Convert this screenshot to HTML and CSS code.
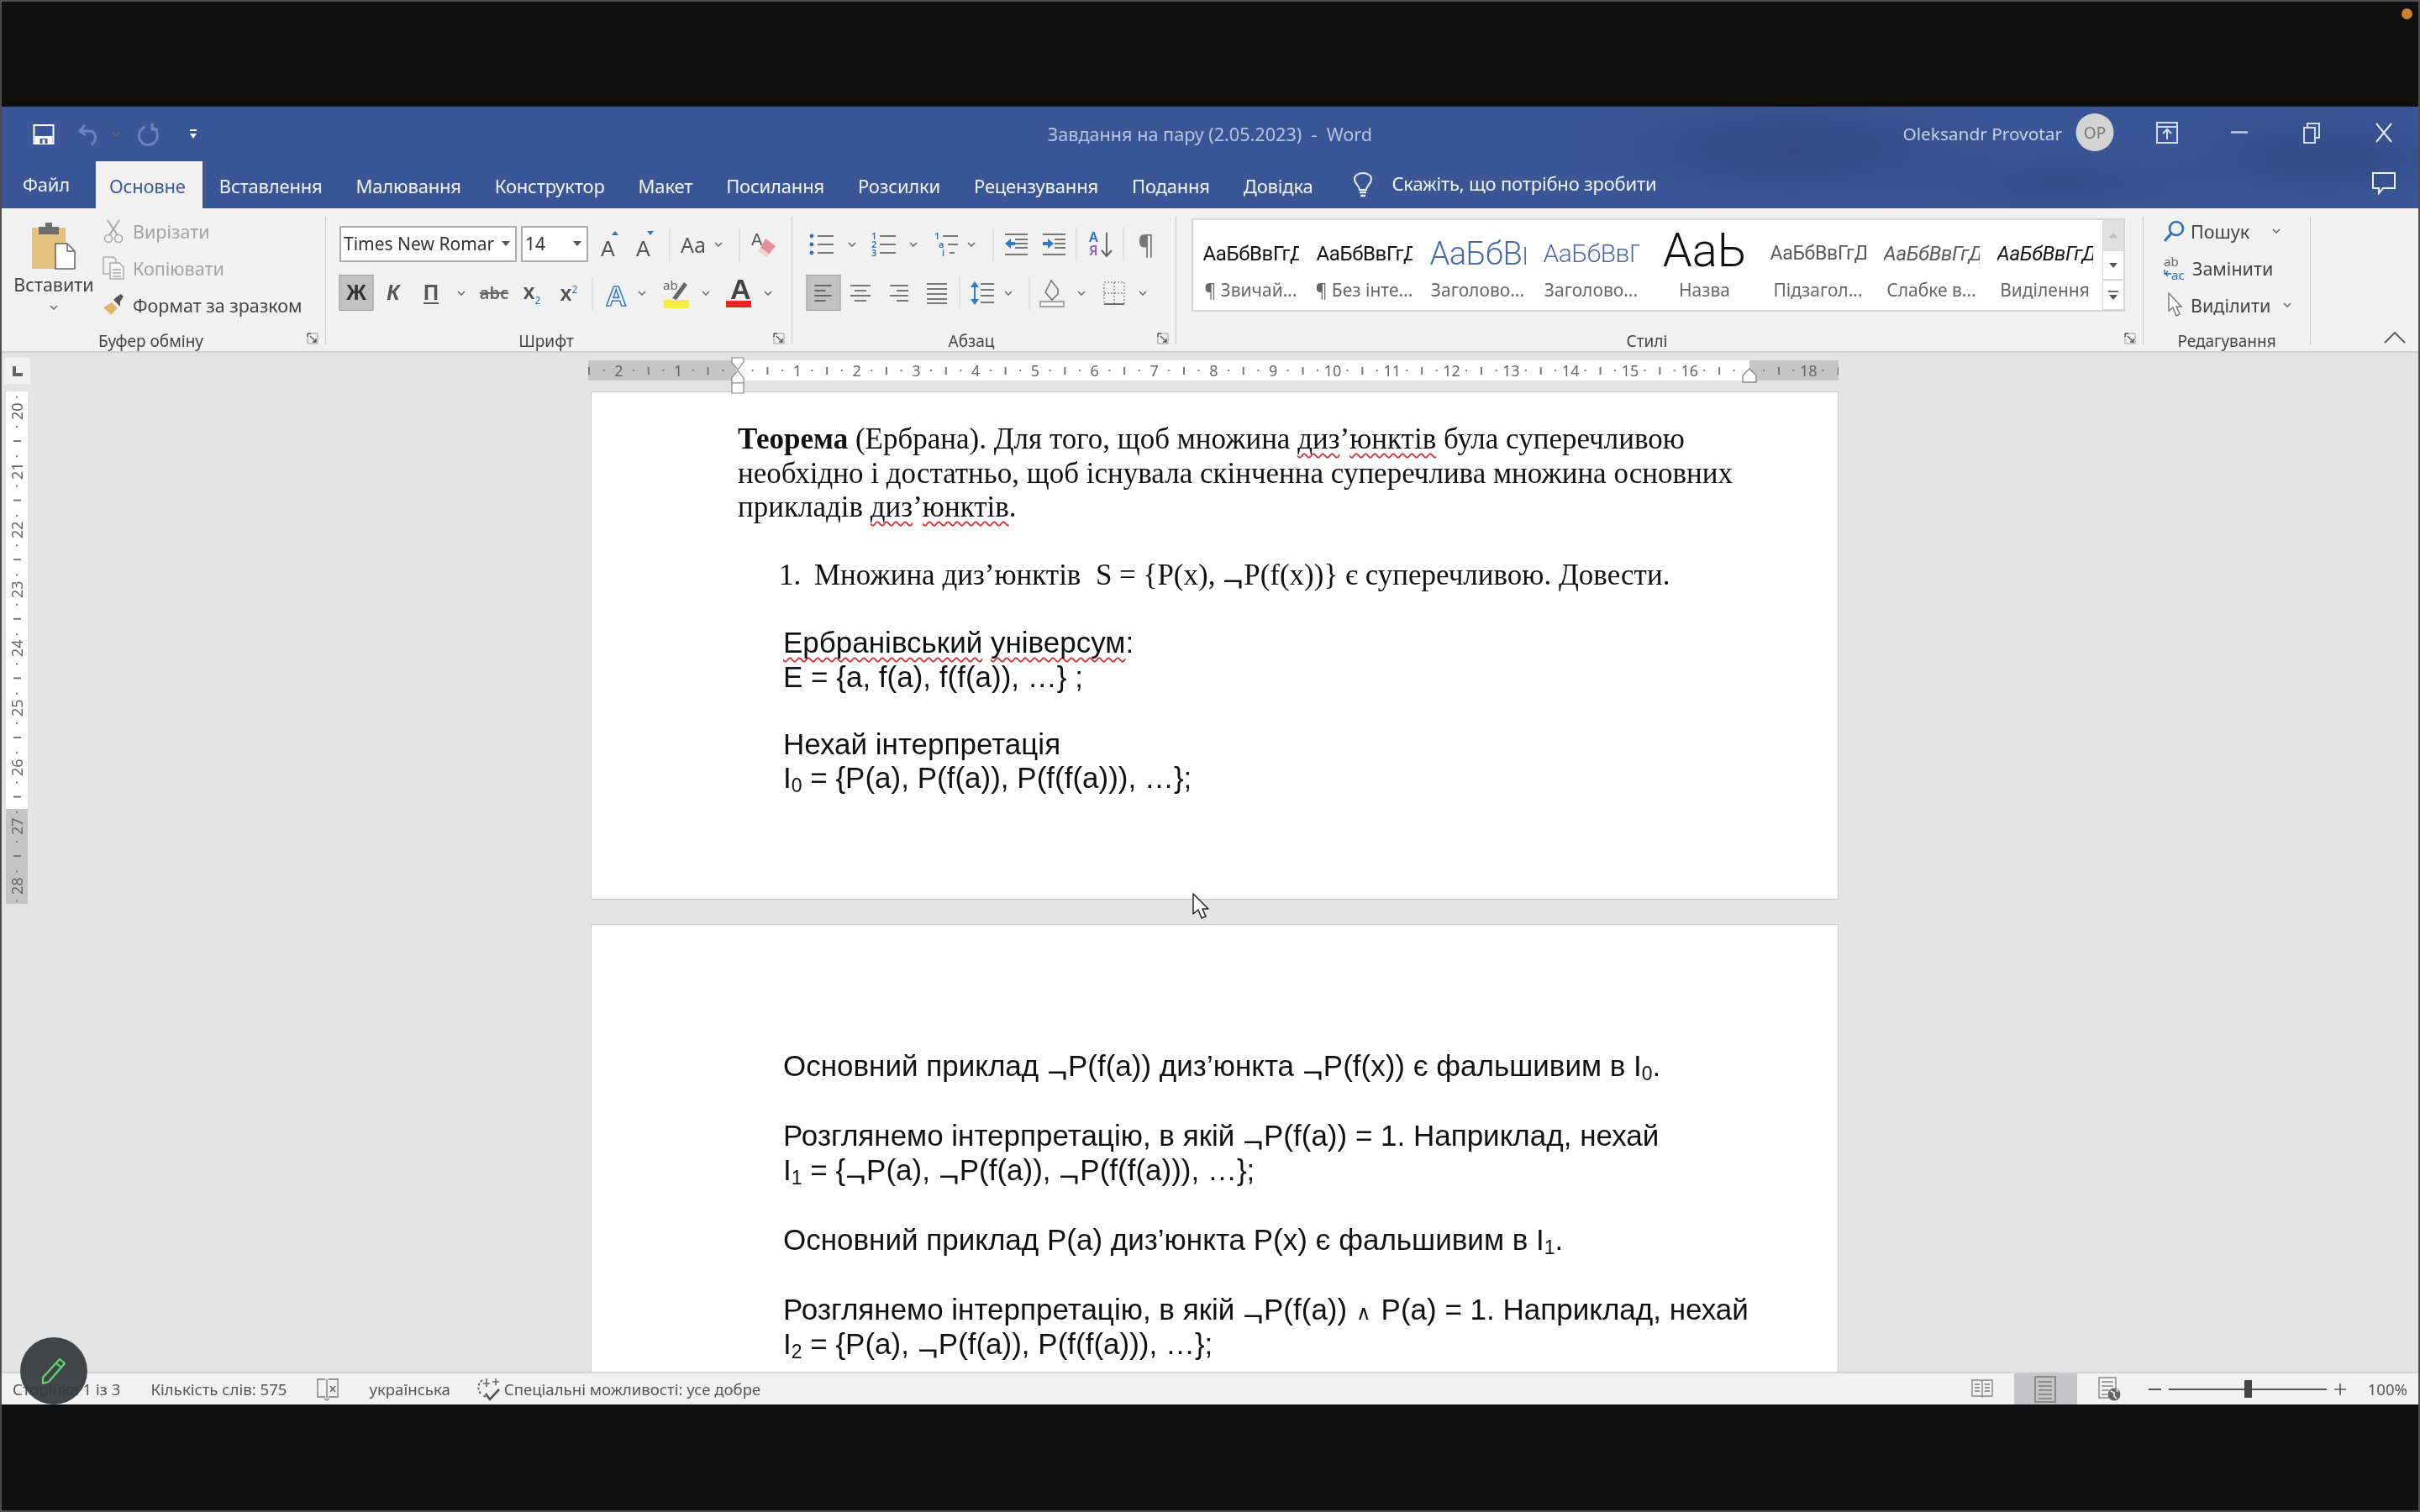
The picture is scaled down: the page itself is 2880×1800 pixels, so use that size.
FILE: index.html
```html
<!DOCTYPE html>
<html lang="uk">
<head>
<meta charset="utf-8">
<title>Завдання на пару (2.05.2023) - Word</title>
<link rel="stylesheet" href="styles.css">
</head>
<body>
<svg class="defs" width="0" height="0">
  <symbol id="chev" viewBox="0 0 10 6"><path d="M1 1l4 4 4-4" fill="none" stroke="#666" stroke-width="1.5"/></symbol>
  <symbol id="launch" viewBox="0 0 14 14"><path d="M1 1h12v12H1z" fill="none" stroke="#999" stroke-width="1"/><path d="M1 1v4M1 1h4M4 4l7 7M7 11h4V7" fill="none" stroke="#555" stroke-width="1.4"/></symbol>
</svg>
<div class="screen">
  <span class="rec-dot"></span>
  <div class="window">
    <header class="header">
      <div class="titlebar">
        <div class="strip qat">
          <svg width="25" height="24" viewBox="0 0 25 24"><path d="M1 1h23v22H1z" fill="none" stroke="#fff" stroke-width="2"/><path d="M2 14h21v9H2z" fill="#fff"/><path d="M8 17h9v6H8z" fill="#3b5697"/><path d="M11 18h3v5h-3z" fill="#fff"/></svg>
          <svg width="26" height="28" viewBox="0 0 26 28"><path d="M9 3L3 10l7 5" fill="none" stroke="#6a83b8" stroke-width="3"/><path d="M4 10h10c9 0 10 11 3 16" fill="none" stroke="#6a83b8" stroke-width="3"/></svg>
          <svg class="icon-chev-dim" width="10" height="6"><use href="#chev"/></svg>
          <svg width="26" height="28" viewBox="0 0 26 28"><path d="M9 5a11 11 0 1 0 9 1" fill="none" stroke="#6a83b8" stroke-width="3"/><path d="M17 1v7h7" fill="none" stroke="#6a83b8" stroke-width="3"/></svg>
          <svg width="10" height="14" viewBox="0 0 10 14"><path d="M1 2h8" stroke="#fff" stroke-width="2"/><path d="M1 6h8l-4 6z" fill="#fff"/></svg>
        </div>
        <div class="doc-title">Завдання на пару (2.05.2023)&nbsp; -&nbsp; Word</div>
        <div class="account">
          <span class="user">Oleksandr Provotar</span>
          <div class="strip winbtns">
            <span class="avatar">OP</span>
            <svg width="26" height="26" viewBox="0 0 26 26"><path d="M1 1h24v24H1zM1 6h24" fill="none" stroke="#d5dcec" stroke-width="2"/><path d="M13 21V10M8 14l5-5 5 5" fill="none" stroke="#d5dcec" stroke-width="2"/></svg>
            <svg width="20" height="3" viewBox="0 0 20 3"><path d="M0 1.5h20" stroke="#c5cee2" stroke-width="2.4"/></svg>
            <svg width="20" height="26" viewBox="0 0 20 26"><path d="M1 7h13v18H1z" fill="none" stroke="#d5dcec" stroke-width="2"/><path d="M5 7V2h14v17h-5" fill="none" stroke="#d5dcec" stroke-width="2"/></svg>
            <svg width="20" height="24" viewBox="0 0 20 24"><path d="M1 1l18 22M19 1L1 23" stroke="#e3e7f1" stroke-width="2"/></svg>
          </div>
        </div>
      </div>
      <nav class="tabs">
        <a class="tab tab-file">Файл</a>
        <a class="tab tab-active">Основне</a>
        <a class="tab">Вставлення</a>
        <a class="tab">Малювання</a>
        <a class="tab">Конструктор</a>
        <a class="tab">Макет</a>
        <a class="tab">Посилання</a>
        <a class="tab">Розсилки</a>
        <a class="tab">Рецензування</a>
        <a class="tab">Подання</a>
        <a class="tab">Довідка</a>
        <svg class="bulb" width="24" height="30" viewBox="0 0 24 30"><path d="M8 21c0-5-6-7-6-13a10 7 0 0 1 20 0c0 6-6 8-6 13z" fill="none" stroke="#e6ebf5" stroke-width="2"/><path d="M8 24h8M9 28h6" stroke="#e6ebf5" stroke-width="2.4"/></svg>
        <span class="tell">Скажіть, що потрібно зробити</span>
        <svg class="comment" width="28" height="26" viewBox="0 0 28 26"><path d="M1 1h26v18H13l-5 6v-6H1z" fill="none" stroke="#eef1f7" stroke-width="2"/></svg>
      </nav>
    </header>

    <section class="ribbon">
      <div class="group g-clip">
        <div class="clip-body">
          <div class="paste">
            <svg width="52" height="57" viewBox="0 0 52 57"><path d="M0 8h40v49H0z" fill="#e3c27f"/><path d="M8 7h8V2h8v5h8v9H8z" fill="#6e6e6e"/><path d="M28 27h14l9 9v21H28z" fill="#fff" stroke="#666" stroke-width="1.5"/><path d="M42 27v9h9" fill="none" stroke="#666" stroke-width="1.5"/></svg>
            <span class="paste-label">Вставити</span>
            <svg class="paste-chev" width="10" height="6"><use href="#chev"/></svg>
          </div>
          <div class="clip-small">
            <div class="small-row is-off">
              <svg width="26" height="28" viewBox="0 0 26 28"><path d="M6 1l12 18M20 1L8 19" stroke="#a8a8a8" stroke-width="2"/><circle cx="7" cy="23" r="4.5" fill="none" stroke="#a8a8a8" stroke-width="1.6"/><circle cx="19" cy="23" r="4.5" fill="none" stroke="#a8a8a8" stroke-width="1.6"/></svg>
              <span>Вирізати</span>
            </div>
            <div class="small-row is-off">
              <svg width="26" height="28" viewBox="0 0 26 28"><path d="M1 1h12l3 3v5M1 1v20h7" fill="none" stroke="#a8a8a8" stroke-width="1.5"/><path d="M9 8h11l5 5v14H9z" fill="#f7f7f7" stroke="#a8a8a8" stroke-width="1.5"/><path d="M12 16h10M12 20h10M12 24h10" stroke="#a8a8a8" stroke-width="1.4"/></svg>
              <span>Копіювати</span>
            </div>
            <div class="small-row">
              <svg width="26" height="28" viewBox="0 0 26 28"><path d="M11 11l7 7-8 8-9-9z" fill="#e0b56d"/><path d="M16 5l6-4 3 3-4 6 0 6-8-8z" fill="#555"/></svg>
              <span>Формат за зразком</span>
            </div>
          </div>
        </div>
        <div class="group-label with-launch">Буфер обміну<svg class="launcher" width="14" height="14"><use href="#launch"/></svg></div>
      </div>

      <div class="group g-font">
        <div class="tool-body">
          <div class="font-row">
            <div class="combo combo-font"><span>Times New Romar</span><i class="tri"></i></div>
            <div class="combo combo-size"><span>14</span><i class="tri"></i></div>
            <div class="strip s-font1">
              <svg width="24" height="34" viewBox="0 0 24 34"><text x="1" y="31" class="svg-a">A</text><path d="M14 6l4-5 4 5z" fill="#3a6fb5"/></svg>
              <svg width="24" height="34" viewBox="0 0 24 34"><text x="1" y="31" class="svg-a">A</text><path d="M14 1l4 5 4-5z" fill="#3a6fb5"/></svg>
              <i class="sep"></i>
              <span class="glyph">Aa</span>
              <svg width="10" height="6"><use href="#chev"/></svg>
              <i class="sep"></i>
              <svg width="30" height="32" viewBox="0 0 30 32"><text x="0" y="17" class="svg-a svg-a-s">A</text><path d="M17 9l12 9-11 13-9-7z" fill="#e58d9c"/><path d="M9 24l9 7 3-4-9-7z" fill="#f5d2d8"/></svg>
            </div>
          </div>
          <div class="strip s-font2">
            <span class="press fmt-b">Ж</span>
            <span class="fmt-i">К</span>
            <span class="fmt-u">П</span>
            <svg width="10" height="6"><use href="#chev"/></svg>
            <span class="fmt-s">abc</span>
            <span class="fmt-x">x<sub>2</sub></span>
            <span class="fmt-x">x<sup>2</sup></span>
            <i class="sep"></i>
            <svg width="26" height="32" viewBox="0 0 26 32"><text x="0" y="31" class="svg-big" fill="#fff" stroke="#3a78c8" stroke-width="1.6">A</text></svg>
            <svg width="10" height="6"><use href="#chev"/></svg>
            <svg width="32" height="36" viewBox="0 0 32 36"><text x="0" y="14" class="svg-tiny">ab</text><path d="M11 24L25 5l4 3-13 18z" fill="#666"/><path d="M1 26h30v10H1z" fill="#f6ec3c"/></svg>
            <svg width="10" height="6"><use href="#chev"/></svg>
            <svg width="30" height="34" viewBox="0 0 30 34"><text x="5" y="24" class="svg-big" fill="#444">A</text><path d="M0 26h30v8H0z" fill="#e8281f"/></svg>
            <svg width="10" height="6"><use href="#chev"/></svg>
          </div>
        </div>
        <div class="group-label with-launch">Шрифт<svg class="launcher" width="14" height="14"><use href="#launch"/></svg></div>
      </div>

      <div class="group g-para">
        <div class="tool-body">
          <div class="strip s-para1">
            <svg width="30" height="28" viewBox="0 0 30 28"><path d="M10 4h19M10 14h19M10 24h19" stroke="#777" stroke-width="2"/><circle cx="3" cy="4" r="2.4" fill="#3a6fb5"/><circle cx="3" cy="14" r="2.4" fill="#3a6fb5"/><circle cx="3" cy="24" r="2.4" fill="#3a6fb5"/></svg>
            <svg width="10" height="6"><use href="#chev"/></svg>
            <svg width="30" height="30" viewBox="0 0 30 30"><text x="0" y="9" class="svg-num">1</text><text x="0" y="19" class="svg-num">2</text><text x="0" y="29" class="svg-num">3</text><path d="M10 5h19M10 15h19M10 25h19" stroke="#777" stroke-width="2"/></svg>
            <svg width="10" height="6"><use href="#chev"/></svg>
            <svg width="30" height="30" viewBox="0 0 30 30"><text x="0" y="9" class="svg-num">1</text><text x="5" y="19" class="svg-num">a</text><text x="9" y="29" class="svg-num">i</text><path d="M10 5h18M16 15h12M18 25h6" stroke="#777" stroke-width="2"/></svg>
            <svg width="10" height="6"><use href="#chev"/></svg>
            <i class="sep"></i>
            <svg width="28" height="28" viewBox="0 0 28 28"><path d="M1 2h27M13 8h15M13 13h15M13 18h15M1 26h27" stroke="#777" stroke-width="2"/><path d="M1 13l7-6v4h5v4H8v4z" fill="#2e7ac9"/></svg>
            <svg width="28" height="28" viewBox="0 0 28 28"><path d="M1 2h27M15 8h13M15 13h13M15 18h13M1 26h27" stroke="#777" stroke-width="2"/><path d="M14 13l-7-6v4H1v4h6v4z" fill="#2e7ac9"/></svg>
            <i class="sep"></i>
            <svg width="28" height="32" viewBox="0 0 28 32"><text x="0" y="13" class="svg-az svg-az-a">A</text><text x="0" y="29" class="svg-az svg-az-b">Я</text><path d="M21 2v27M15 23l6 7 6-7" fill="none" stroke="#666" stroke-width="2"/></svg>
            <i class="sep"></i>
            <span class="pilcrow">¶</span>
          </div>
          <div class="strip s-para2">
            <span class="press"><svg width="22" height="22" viewBox="0 0 22 22"><path d="M0 2h20M0 8h13M0 14h20M0 20h13" stroke="#666" stroke-width="2"/></svg></span>
            <svg width="24" height="22" viewBox="0 0 24 22"><path d="M0 2h24M5 8h14M0 14h24M5 20h14" stroke="#777" stroke-width="2"/></svg>
            <svg width="22" height="22" viewBox="0 0 22 22"><path d="M0 2h22M8 8h14M0 14h22M8 20h14" stroke="#777" stroke-width="2"/></svg>
            <svg width="24" height="26" viewBox="0 0 24 26"><path d="M0 2h24M0 8h24M0 14h24M0 20h24M0 25h24" stroke="#777" stroke-width="2"/></svg>
            <i class="sep"></i>
            <svg width="28" height="30" viewBox="0 0 28 30"><path d="M12 4h16M12 11h16M12 18h16M12 26h16" stroke="#777" stroke-width="2"/><path d="M5 1l5 7H0zM5 29l5-7H0z" fill="#2e7ac9"/><path d="M5 7v16" stroke="#2e7ac9" stroke-width="2"/></svg>
            <svg width="10" height="6"><use href="#chev"/></svg>
            <i class="sep"></i>
            <svg width="30" height="34" viewBox="0 0 30 34"><path d="M14 2l8 10v6l-7 7-8-9z" fill="none" stroke="#777" stroke-width="1.6"/><path d="M1 27h28v6H1z" fill="#f3f3f3" stroke="#888" stroke-width="1.4"/></svg>
            <svg width="10" height="6"><use href="#chev"/></svg>
            <svg width="26" height="28" viewBox="0 0 26 28"><path d="M1 1h24v26H1zM1 14h24M13 1v26" fill="none" stroke="#8a8a8a" stroke-width="1.4" stroke-dasharray="2 2"/><path d="M1 27h24" stroke="#555" stroke-width="1.6"/></svg>
            <svg width="10" height="6"><use href="#chev"/></svg>
          </div>
        </div>
        <div class="group-label with-launch">Абзац<svg class="launcher" width="14" height="14"><use href="#launch"/></svg></div>
      </div>

      <div class="group g-styles">
        <div class="gallery">
          <div class="style-item"><span class="sample s-normal">АаБбВвГгД</span><span class="style-name">¶ Звичай...</span></div>
          <div class="style-item"><span class="sample s-normal">АаБбВвГгД</span><span class="style-name">¶ Без інте...</span></div>
          <div class="style-item"><span class="sample s-h1">АаБбВвГ</span><span class="style-name">Заголово...</span></div>
          <div class="style-item"><span class="sample s-h2">АаБбВвГ</span><span class="style-name">Заголово...</span></div>
          <div class="style-item"><span class="sample s-title">АаЬ</span><span class="style-name">Назва</span></div>
          <div class="style-item"><span class="sample s-sub">АаБбВвГгД</span><span class="style-name">Підзагол...</span></div>
          <div class="style-item"><span class="sample s-em">АаБбВвГгД</span><span class="style-name">Слабке в...</span></div>
          <div class="style-item"><span class="sample s-em s-em2">АаБбВвГгД</span><span class="style-name">Виділення</span></div>
          <div class="gallery-scroll">
            <span class="gs gs-off"><i class="tri tri-up"></i></span>
            <span class="gs"><i class="tri"></i></span>
            <span class="gs gs-more"><b></b><i class="tri"></i></span>
          </div>
        </div>
        <div class="group-label with-launch">Стилі<svg class="launcher" width="14" height="14"><use href="#launch"/></svg></div>
      </div>

      <div class="group g-edit">
        <div class="edit-body">
          <div class="small-row">
            <svg width="26" height="26" viewBox="0 0 26 26"><circle cx="16" cy="10" r="8" fill="none" stroke="#2f6fb5" stroke-width="2.6"/><path d="M10 16L2 25" stroke="#2f6fb5" stroke-width="3"/></svg>
            <span>Пошук</span><svg class="edit-chev-a" width="10" height="6"><use href="#chev"/></svg>
          </div>
          <div class="small-row">
            <svg width="28" height="30" viewBox="0 0 28 30"><text x="1" y="13" class="svg-ab">ab</text><text x="10" y="29" class="svg-ab svg-ac">ac</text><path d="M2 17v5h8M6 19l-3 3 3 3" fill="none" stroke="#2f6fb5" stroke-width="1.5"/></svg>
            <span>Замінити</span>
          </div>
          <div class="small-row">
            <svg width="26" height="30" viewBox="0 0 26 30"><path d="M7 1v21l5-4 4 10 4-2-4-9h6z" fill="#fff" stroke="#777" stroke-width="1.4"/></svg>
            <span>Виділити</span><svg class="edit-chev-b" width="10" height="6"><use href="#chev"/></svg>
          </div>
        </div>
        <div class="group-label">Редагування</div>
      </div>

      <div class="ribbon-end">
        <svg width="26" height="14" viewBox="0 0 26 14"><path d="M1 13L13 1l12 12" fill="none" stroke="#555" stroke-width="1.8"/></svg>
      </div>
    </section>

    <main class="doc">
      <aside class="vcol">
        <div class="tab-sel"><i></i></div>
        <div class="vruler">
          <span><b>20</b></span><span><b>21</b></span><span><b>22</b></span><span><b>23</b></span><span><b>24</b></span><span><b>25</b></span><span><b>26</b></span><span><b>27</b></span><span><b>28</b></span>
        </div>
      </aside>
      <div class="canvas">
        <div class="hruler">
          <div class="rnums">
            <span>2</span><span>1</span><span></span><span>1</span><span>2</span><span>3</span><span>4</span><span>5</span><span>6</span><span>7</span><span>8</span><span>9</span><span>10</span><span>11</span><span>12</span><span>13</span><span>14</span><span>15</span><span>16</span><span></span><span>18</span>
          </div>
          <svg class="marker-left" width="34" height="44" viewBox="0 0 34 44"><path d="M1 1h14v5l-7 9-7-9z" transform="translate(9 0)" fill="#fff" stroke="#888" stroke-width="1.2"/><path d="M17 16l7 9v6H10v-6z" fill="#fff" stroke="#888" stroke-width="1.2"/><path d="M10 31h14v12H10z" fill="#fff" stroke="#888" stroke-width="1.2"/></svg>
          <svg class="marker-right" width="18" height="18" viewBox="0 0 18 18"><path d="M9 1l8 8v8H1V9z" fill="#fff" stroke="#888" stroke-width="1.4"/></svg>
        </div>
        <article class="page page-first">
          <p class="tnr"><b>Теорема</b> (Ербрана). Для того, щоб множина <span class="sp">диз</span>’<span class="sp">юнктів</span> була суперечливою<br>необхідно і достатньо, щоб існувала скінченна суперечлива множина основних<br>прикладів <span class="sp">диз</span>’<span class="sp">юнктів</span>.</p>
          <p class="tnr listed"><span class="num">1.</span><span>Множина диз’юнктів&nbsp; S = {P(x), <span class="not">¬</span>P(f(x))} є суперечливою. Довести.</span></p>
          <p class="ari ari-first"><span class="sp">Ербранівський</span> <span class="sp">універсум</span>:<br>Е = {a, f(a), f(f(a)), …} ;</p>
          <p class="ari">Нехай інтерпретація<br>I<sub>0</sub> = {P(a), P(f(a)), P(f(f(a))), …};</p>
        </article>
        <article class="page page-second">
          <p class="ari">Основний приклад <span class="not">¬</span>P(f(a)) диз’юнкта <span class="not">¬</span>P(f(x)) є фальшивим в I<sub>0</sub>.</p>
          <p class="ari">Розглянемо інтерпретацію, в якій <span class="not">¬</span>P(f(a)) = 1. Наприклад, нехай<br>I<sub>1</sub> = {<span class="not">¬</span>P(a), <span class="not">¬</span>P(f(a)), <span class="not">¬</span>P(f(f(a))), …};</p>
          <p class="ari">Основний приклад P(a) диз’юнкта P(x) є фальшивим в I<sub>1</sub>.</p>
          <p class="ari">Розглянемо інтерпретацію, в якій <span class="not">¬</span>P(f(a)) <span class="and">∧</span> P(a) = 1. Наприклад, нехай<br>I<sub>2</sub> = {P(a), <span class="not">¬</span>P(f(a)), P(f(f(a))), …};</p>
        </article>
      </div>
    </main>

    <footer class="status">
      <span>Сторінка 1 із 3</span>
      <span>Кількість слів: 575</span>
      <svg width="26" height="26" viewBox="0 0 26 26"><path d="M10 1H1v21h9M14 1h11v21H14M12 1v23M9 24l3 2 3-2" fill="none" stroke="#777" stroke-width="1.3"/><path d="M16 9l6 7M22 9l-6 7" stroke="#666" stroke-width="1.6"/></svg>
      <span>українська</span>
      <span class="a11y">
        <svg width="30" height="30" viewBox="0 0 30 30"><path d="M8 4a11 11 0 0 0-2 16M12 24l-3-2" fill="none" stroke="#666" stroke-width="2" stroke-dasharray="3 2"/><path d="M13 2v10M9 8h8M20 6h8M24 2v8" stroke="#666" stroke-width="1.6"/><path d="M12 20l5 7 11-12" fill="none" stroke="#555" stroke-width="2.6"/></svg>
        Спеціальні можливості: усе добре
      </span>
      <div class="status-right">
        <svg class="v-read" width="26" height="24" viewBox="0 0 26 24"><path d="M1 1h11l1 1 1-1h11v19H14l-1 1-1-1H1zM13 2v20" fill="none" stroke="#888" stroke-width="1.4"/><path d="M4 6h6M4 10h6M4 14h6M16 6h6M16 10h6M16 14h6" stroke="#777" stroke-width="1.4"/></svg>
        <span class="v-print"><svg width="26" height="32" viewBox="0 0 26 32"><path d="M1 1h24v30H1z" fill="none" stroke="#7a7a7a" stroke-width="1.6"/><path d="M5 7h16M5 12h16M5 17h16M5 22h16M5 27h16" stroke="#7a7a7a" stroke-width="1.6"/></svg></span>
        <svg class="v-web" width="27" height="30" viewBox="0 0 27 30"><path d="M1 1h20v24H1z" fill="#f2f2f2" stroke="#888" stroke-width="1.4"/><path d="M4 6h14M4 11h14M4 16h9M4 21h7" stroke="#888" stroke-width="1.4"/><circle cx="19" cy="21" r="7.5" fill="#666"/><path d="M15 17l4 2 0 4 3 3M22 15l1 3" stroke="#f2f2f2" stroke-width="1.6" fill="none"/></svg>
        <i class="z-minus"></i>
        <div class="slider"><i></i></div>
        <svg class="z-plus" width="14" height="14" viewBox="0 0 14 14"><path d="M0 7h14M7 0v14" stroke="#555" stroke-width="1.6"/></svg>
        <span class="zoom-val">100%</span>
      </div>
    </footer>
  </div>

  <div class="pen-fab"><svg width="30" height="32" viewBox="0 0 30 32"><path d="M22 2l6 5L9 29l-7 2 0-7zM18 7l6 5" fill="none" stroke="#62d56c" stroke-width="2.2" stroke-linejoin="round"/></svg></div>
  <svg class="cursor" width="20" height="32" viewBox="0 0 20 32"><path d="M1 1v24l6-5 4 10 5-2-4-9h7z" fill="#fff" stroke="#222" stroke-width="1.5" stroke-linejoin="round"/></svg>
</div>
</body>
</html>
```

FILE: styles.css
```css
* { box-sizing: border-box; }
html, body { margin: 0; padding: 0; }
body { width: 2880px; height: 1800px; overflow: hidden; background: #111; font-family: "Noto Sans", "Open Sans", sans-serif; }
svg { overflow: visible; }
.defs { position: absolute; }
.screen { position: relative; width: 2880px; height: 1800px; border: 2px solid #4e4e4e; background: #111; overflow: hidden; padding-top: 125px; }
.rec-dot { position: absolute; top: 8px; right: 7px; width: 13px; height: 13px; border-radius: 50%; background: #c9822f; }
.window { height: 1545px; display: flex; flex-direction: column; filter: blur(.55px); }

/* center-anchored icon strip */
.strip { display: grid; grid-auto-flow: column; align-items: center; justify-content: start; height: 43px; }
.strip > * { justify-self: start; transform: translateX(-50%); }

.header { height: 121px; flex: none;
  background:
    radial-gradient(ellipse 260px 70px at 2130px 50px, rgba(40,60,110,.45), transparent),
    radial-gradient(ellipse 200px 60px at 2760px 60px, rgba(40,60,110,.4), transparent),
    radial-gradient(ellipse 220px 50px at 2450px 90px, rgba(40,60,110,.3), transparent),
    #3b5697; }
.titlebar { height: 65px; display: grid; grid-template-columns: 1fr auto 1fr; align-items: center; }
.qat { margin-left: 50px; grid-template-columns: 53px 33px 39px 53px 10px; }
.doc-title { color: #b7c3dd; font-size: 21.6px; }
.account { display: flex; justify-content: flex-end; align-items: center; color: #c9d2e5; margin-top: -6px; }
.user { font-size: 20.8px; margin-right: 39px; margin-top: 4px; }
.winbtns { grid-template-columns: 86px 86px 86px 86px 41px; }
.avatar { width: 45px; height: 45px; border-radius: 50%; background: #d3d3d3; color: #777; font-size: 19px; display: flex; align-items: center; justify-content: center; }
.tabs { height: 56px; display: flex; align-items: center; color: #f2f4f9; font-size: 22px; letter-spacing: -.2px; }
.tab { padding: 0 20px; height: 56px; line-height: 58px; }
.tab-file { padding: 0 31px 0 25px; line-height: 54px; }
.tab-active { padding: 0 20px 0 16px; background: #f1f1f1; color: #3a5a9c; }
.bulb { margin-left: 28px; }
.tell { margin-left: 22px; line-height: 56px; margin-top: -4px; }
.comment { margin-left: auto; margin-right: 27px; margin-top: -4px; }

.ribbon { height: 172px; flex: none; display: flex; padding: 9px 0 8px; background: #f1f1f1; border-bottom: 2px solid #d0d0d0; color: #444; font-size: 21.5px; }
.group { position: relative; display: flex; flex-direction: column; border-right: 1px solid #c9c9c9; height: 153px; flex: none; }
.g-clip { width: 386px; }
.g-font { width: 555px; }
.g-para { width: 457px; }
.g-styles { width: 1151px; }
.g-edit { width: 199px; }
.group-label { position: relative; height: 22px; margin-bottom: -7px; margin-top: auto; display: flex; justify-content: center; align-items: center; font-size: 19px; color: #444; white-space: nowrap; }
.with-launch { padding-right: 30px; }
.launcher { position: absolute; right: 8px; top: 1px; }

.clip-body { display: flex; height: 129px; }
.paste { width: 120px; padding: 6px 0 0 4px; display: flex; flex-direction: column; align-items: center; }
.paste-label { line-height: 30px; margin-top: 4px; }
.paste-chev { margin-top: 9px; }
.clip-small { display: flex; flex-direction: column; margin-top: -4px; }
.small-row { height: 44px; display: flex; align-items: center; gap: 10px; white-space: nowrap; }
.small-row > svg:first-child { flex: none; }
.is-off { color: #a3a3a3; }

.tool-body { display: flex; flex-direction: column; gap: 15px; padding-top: 12px; }
.font-row { display: flex; margin-left: 16px; }
.combo { height: 43px; background: #fff; border: 2px solid #ababab; display: flex; align-items: center; justify-content: space-between; padding: 0 6px 2px 3px; color: #333; overflow: hidden; white-space: nowrap; font-size: 21px; }
.combo-font { width: 211px; margin-right: 5px; }
.combo-font span { width: 184px; overflow: hidden; }
.combo-size { width: 80px; }
.tri { display: block; width: 0; height: 0; flex: none; border: 5px solid transparent; border-top: 6px solid #555; border-bottom: 0; }
.s-font1 { margin-left: 26px; grid-template-columns: 42px 29px 28px 30px 25px 29px 10px; }
.s-font2 { margin-left: 36px; grid-template-columns: 44px 45px 36px 39px 45px 44px 28px 29px 30px 41px 35px 39px 35px 10px; }
.s-para1 { margin-left: 35px; grid-template-columns: 36px 38px 35px 40px 29px 26px 27px 45px 27px 29px 27px 27px 10px; }
.s-para2 { margin-left: 37px; grid-template-columns: 44px 46px 45px 27px 27px 31px 25px 27px 35px 39px 34px 10px; }
.sep { display: block; width: 1px; height: 40px; background: #cfcfcf; }
.press { width: 41px; height: 43px; background: #c1c1c1; border: 1px solid #9d9d9d; display: flex; align-items: center; justify-content: center; }
.glyph { font-size: 25px; color: #555; }
.pilcrow { font-size: 30px; color: #777; line-height: 1; }
.fmt-b { font-family: "Liberation Sans", sans-serif; font-weight: 700; font-size: 26px; color: #333; }
.fmt-i { font-family: "Liberation Sans", sans-serif; font-weight: 700; font-style: italic; font-size: 25px; color: #555; }
.fmt-u { font-family: "Liberation Sans", sans-serif; font-weight: 700; font-size: 25px; color: #555; text-decoration: underline; text-underline-offset: 3px; }
.fmt-s { font-weight: 600; font-size: 20px; color: #666; text-decoration: line-through; }
.fmt-x { font-weight: 600; font-size: 25px; color: #555; line-height: 1; }
.fmt-x sub, .fmt-x sup { font-size: 12px; font-weight: 400; color: #2f6fb5; }
.svg-a { font-family: "Liberation Sans", sans-serif; font-size: 25px; fill: #555; }
.svg-a-s { font-size: 20px; }
.svg-big { font-family: "Liberation Sans", sans-serif; font-size: 34px; font-weight: 700; }
.svg-tiny { font-size: 15px; fill: #666; }
.svg-num { font-size: 11px; fill: #2f6fb5; font-weight: 600; }
.svg-az { font-size: 16px; font-weight: 600; }
.svg-az-a { fill: #2f6fb5; }
.svg-az-b { fill: #8b5fb0; }
.svg-ab { font-size: 15px; fill: #666; }
.svg-ac { fill: #2f6fb5; }

.gallery { display: flex; margin: 3px 0 0 18px; width: 1111px; height: 111px; background: #fff; border: 2px solid #d6d6d6; padding-left: 1px; }
.style-item { width: 135px; flex: none; display: flex; flex-direction: column; align-items: center; overflow: hidden; position: relative; }
.sample { display: block; width: 114px; height: 66px; line-height: 80px; overflow: hidden; white-space: nowrap; color: #111; font-family: Roboto, sans-serif; font-size: 24px; text-align: left; }
.s-normal { letter-spacing: -.4px; }
.s-h1 { font-size: 38px; font-weight: 300; color: #4a68ac; letter-spacing: -.5px; line-height: 80px; }
.s-h2 { font-size: 30px; font-weight: 300; color: #4a68ac; letter-spacing: -.5px; }
.s-title { font-size: 56px; font-weight: 300; height: 66px; line-height: 72px; letter-spacing: 0; text-align: center; overflow: visible; }
.s-sub { font-size: 23px; color: #5a5a5a; letter-spacing: -.3px; }
.s-em { font-style: italic; font-size: 24px; color: #5a5a5a; letter-spacing: -.3px; }
.s-em2 { color: #111; }
.style-name { font-size: 21px; color: #666; line-height: 28px; margin-top: 3px; white-space: nowrap; }
.gallery-scroll { width: 26px; display: flex; flex-direction: column; margin-left: 1px; }
.gs { flex: 1; display: flex; flex-direction: column; align-items: center; justify-content: center; gap: 3px; border: 1px solid #d6d6d6; border-right: 0; }
.gs-off { background: #dfdfdf; border-color: #dfdfdf; }
.gs b { display: block; width: 12px; height: 2px; background: #666; }
.tri-up { border-top: 0; border-bottom: 6px solid #c0c0c0; }

.edit-body { display: flex; flex-direction: column; margin: -4px 0 0 23px; }
.edit-body .small-row { gap: 7px; }
.edit-chev-a { margin-left: 20px; }
.edit-chev-b { margin-left: 8px; }
.ribbon-end { flex: 1; display: flex; justify-content: flex-end; align-items: flex-end; padding: 0 15px 1px 0; }

.doc { height: 1213px; flex: none; display: flex; overflow: hidden; background: #e4e4e4; }
.vcol { width: 36px; flex: none; padding-top: 6px; }
.tab-sel { width: 31px; height: 31px; margin-left: 3px; background: #f2f2f2; position: relative; }
.tab-sel i { position: absolute; left: 10px; top: 10px; width: 12px; height: 12px; border-left: 4px solid #666; border-bottom: 4px solid #666; }
.vruler { margin: 9px 0 0 5px; width: 26px; height: 610px; padding-top: 24px; color: #666; font-size: 18px; display: flex; flex-direction: column;
  background:
    linear-gradient(#777 2px, transparent 2px) 50% 58px / 9px 70.6px repeat-y,
    linear-gradient(#777 2px, transparent 2px) 50% 41px / 2px 35.3px repeat-y,
    linear-gradient(#fff 497px, #c4c4c4 497px); }
.vruler span { height: 70.6px; flex: none; display: flex; justify-content: center; }
.vruler b { display: block; font-weight: 400; line-height: 26px; writing-mode: vertical-rl; transform: translateY(-50%) rotate(180deg); height: 26px; text-align: center; }

.canvas { flex: 1; min-width: 0; }
.hruler { position: relative; margin: 9px 0 0 662px; width: 1488px; height: 24px; color: #666; font-size: 18px;
  background:
    linear-gradient(90deg, #777 2px, transparent 2px) 212.4px 50% / 70.8px 9px repeat-x,
    linear-gradient(90deg, #777 2px, transparent 2px) 194.7px 50% / 35.4px 2px repeat-x,
    linear-gradient(90deg, #c5c5c5 176px, #fff 176px, #fff 1382px, #c5c5c5 1382px); }
.rnums { display: flex; padding-left: 36.4px; line-height: 24px; }
.rnums span { width: 70.8px; flex: none; display: flex; justify-content: flex-start; }
.rnums span:not(:empty) { transform: translateX(-50%); justify-content: center; }
.marker-left { position: absolute; left: 161px; top: -4px; }
.marker-right { position: absolute; left: 1373px; top: 9px; }

.page { margin-left: 665px; width: 1485px; background: #fff; border: 1px solid #c9c9c9; color: #111; overflow: hidden; }
.page p { margin: 0 0 40.6px; }
.page-first { height: 605px; margin-top: 13px; padding: 36px 0 0 174px; line-height: 40.6px; }
.page-second { height: 600px; margin-top: 29px; padding: 147px 0 0 228px; line-height: 41.4px; border-bottom: 0; }
.page-second p { margin-bottom: 41.4px; }
.tnr { font-family: "Liberation Serif", serif; font-size: 35px; }
.ari { font-family: "Liberation Sans", sans-serif; font-size: 35px; white-space: nowrap; }
.page-first .ari { margin-left: 54px; }
.page-first .ari-first { margin-bottom: 39.4px; }
.page-first .listed { display: flex; margin: 1.5px 0 39.1px 49px; }
.num { width: 42px; flex: none; }
.sp { text-decoration: underline wavy #d8353a 2px; text-underline-offset: 5px; text-decoration-skip-ink: none; }
.page sub { font-size: 23px; line-height: 0; vertical-align: -5px; }
.not { display: inline-block; width: 25px; font-family: "Liberation Sans", sans-serif; font-size: 35px; line-height: 0; vertical-align: -7px; transform: scaleX(1.2); transform-origin: 0 50%; }
.and { display: inline-block; width: 21px; text-align: center; font-size: 24px; line-height: 0; }

.status { height: 39px; flex: none; display: flex; align-items: center; gap: 36px; padding-left: 13px; background: #f1f1f1; border-top: 2px solid #d2d2d2; color: #555; font-size: 18.6px; white-space: nowrap; }
.a11y { display: flex; align-items: center; gap: 4px; margin-left: -6px; }
.status-right { margin-left: auto; align-self: stretch; display: flex; align-items: center; padding-right: 13px; }
.v-print { width: 75px; height: 37px; margin: 0 25px; background: #c5c5c7; display: flex; align-items: center; justify-content: center; }
.z-minus { display: block; width: 15px; height: 2px; background: #555; margin-left: 33px; }
.slider { position: relative; width: 188px; height: 2px; background: #555; margin: 0 9px; }
.slider i { position: absolute; left: 90px; top: -10px; width: 9px; height: 21px; background: #444; }
.zoom-val { margin-left: 26px; }

.pen-fab { position: absolute; left: 22px; top: 1590px; width: 80px; height: 80px; border-radius: 50%; background: rgba(54,57,60,.93); display: flex; align-items: center; justify-content: center; filter: blur(.4px); }
.cursor { position: absolute; left: 1417px; top: 1061px; }
```
